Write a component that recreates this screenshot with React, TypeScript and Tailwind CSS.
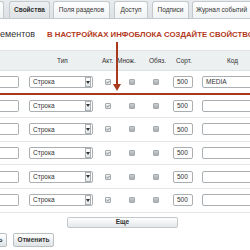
import React from 'react';

const Tab: React.FC<{ label?: string; active?: boolean; className: string }> = ({ label, active, className }) => (
  <div
    className={`h-[17px] shrink-0 flex items-center rounded-t-[3px] border border-b-0 border-[#c2c8cb] text-[6.5px] text-[#333] whitespace-nowrap overflow-hidden ${
      active ? 'bg-gradient-to-b from-[#eef0f1] to-[#dfe3e5] font-bold' : 'bg-gradient-to-b from-[#ffffff] to-[#f0f2f3]'
    } ${className}`}
  >
    {label}
  </div>
);

const Check: React.FC<{ checked?: boolean; className: string }> = ({ checked, className }) =>
  checked ? (
    <div className={`w-[6px] h-[6px] shrink-0 border border-[#a3a9ac] rounded-[1px] bg-gradient-to-b from-[#f6f7f7] to-[#dfe2e4] flex items-center justify-center ${className}`}>
      <svg width="5" height="4" viewBox="0 0 5 4">
        <path d="M0.6 2 L2 3.3 L4.5 0.6" fill="none" stroke="#666" strokeWidth="1" />
      </svg>
    </div>
  ) : (
    <div className={`w-[6px] h-[6px] shrink-0 border border-[#a4aaad] rounded-[1px] bg-gradient-to-b from-[#c9cdd0] to-[#a9aeb1] ${className}`} />
  );

const Row: React.FC<{ code?: string }> = ({ code }) => (
  <div className="h-[23.6px] flex items-center border-b border-[#e3e6e8]">
    <div className="w-[19px] h-[12px] shrink-0 bg-white border border-l-0 border-[#a9afb2] rounded-r-[2px]" />
    <div className="ml-[10px] w-[64px] h-[12px] shrink-0 bg-white border border-[#a9afb2] rounded-[2px] flex items-center">
      <span className="flex-1 pl-[3px] text-[6.5px] text-[#333]">Строка</span>
      <div className="w-[6px] h-[10px] mr-[1px] border border-[#a9afb2] bg-gradient-to-b from-[#ffffff] to-[#e4e7e8] flex items-center justify-center">
        <svg width="4" height="3" viewBox="0 0 4 3">
          <path d="M0 0 L4 0 L2 3 Z" fill="#333" />
        </svg>
      </div>
    </div>
    <Check checked className="ml-[12px]" />
    <Check className="ml-[18px]" />
    <Check className="ml-[18px]" />
    <div className="ml-[14px] w-[20px] h-[12px] shrink-0 bg-white border border-[#a9afb2] rounded-[2px] flex items-center pl-[3px] text-[6.5px] text-[#333]">
      500
    </div>
    <div className="ml-[9px] w-[60px] h-[12px] shrink-0 bg-white border border-[#a9afb2] rounded-[2px] flex items-center pl-[3px] text-[6.5px] text-[#333]">
      {code}
    </div>
  </div>
);

const App: React.FC = () => {
  return (
    <div className="w-[250px] h-[250px] overflow-hidden relative bg-white font-['Liberation_Sans',Arial,sans-serif]">
      {/* Tabs */}
      <div className="h-[19px] bg-gradient-to-b from-[#e9ecee] to-[#dde1e3] border-b border-[#c2c8cb] flex items-end overflow-hidden">
        <Tab className="w-[4px] border-l-0 rounded-tl-none" />
        <Tab label="Свойства" active className="ml-[5px] w-[41px] justify-center" />
        <Tab label="Поля разделов" className="ml-[3px] w-[57px] justify-center" />
        <Tab label="Доступ" className="ml-[4px] w-[34px] justify-center" />
        <Tab label="Подписи" className="ml-[4px] w-[37px] justify-center" />
        <Tab label="Журнал событий" className="ml-[3px] w-[70px] pl-[3px]" />
      </div>

      {/* Title */}
      <div className="h-[31px] flex items-center whitespace-nowrap">
        <span className="text-[9px] text-[#333] w-[47px] shrink-0">ементов</span>
        <span className="text-[7.8px] font-bold text-[#b33a1e]">В НАСТРОЙКАХ ИНФОБЛОКА СОЗДАЙТЕ СВОЙСТВО</span>
      </div>

      {/* Table header */}
      <div className="h-[21px] bg-[#edf0f1] border-t border-[#dfe3e5] border-b border-[#d9dde0] flex items-center text-[6.5px] text-[#333] whitespace-nowrap">
        <span className="w-[57px] shrink-0" />
        <span className="w-[45px] shrink-0">Тип</span>
        <span className="w-[15px] shrink-0">Акт.</span>
        <span className="w-[32px] shrink-0">Множ.</span>
        <span className="w-[27px] shrink-0">Обяз.</span>
        <span className="w-[51px] shrink-0">Сорт.</span>
        <span>Код</span>
      </div>

      {/* Rows */}
      <Row code="MEDIA" />
      <Row />
      <Row />
      <Row />
      <Row />
      <Row />

      {/* More */}
      <div className="h-[17px] flex items-start pt-[4px]">
        <div className="ml-[67px] w-[111px] h-[11px] border border-[#c3c9cc] rounded-[2px] bg-gradient-to-b from-[#ffffff] to-[#e3e7e9] flex items-center justify-center text-[6.5px] font-bold text-[#333]">
          Еще
        </div>
      </div>

      {/* Buttons */}
      <div className="flex items-center mt-[3px] whitespace-nowrap">
        <div className="-ml-[38px] w-[45px] h-[14px] shrink-0 border border-[#b9bfc2] rounded-[2px] bg-gradient-to-b from-[#ffffff] to-[#dfe3e5] flex items-center justify-center text-[6.5px] font-bold text-[#333]">
          Применить
        </div>
        <div className="ml-[6px] w-[41px] h-[14px] shrink-0 border border-[#b9bfc2] rounded-[2px] bg-gradient-to-b from-[#ffffff] to-[#dfe3e5] flex items-center justify-center text-[6.5px] font-bold text-[#333]">
          Отменить
        </div>
      </div>

      {/* Red annotation lines */}
      <div className="absolute left-[116px] top-[42px] w-[2px] h-[44px] bg-[#a8391c]" />
      <svg className="absolute left-[113px] top-[84px]" width="8" height="8" viewBox="0 0 8 8">
        <path d="M0 0 L8 0 L4 7 Z" fill="#a8391c" />
      </svg>
      <div className="absolute left-0 top-[93px] w-[250px] h-[2px] bg-[#a8391c]" />
    </div>
  );
};

export default App;
